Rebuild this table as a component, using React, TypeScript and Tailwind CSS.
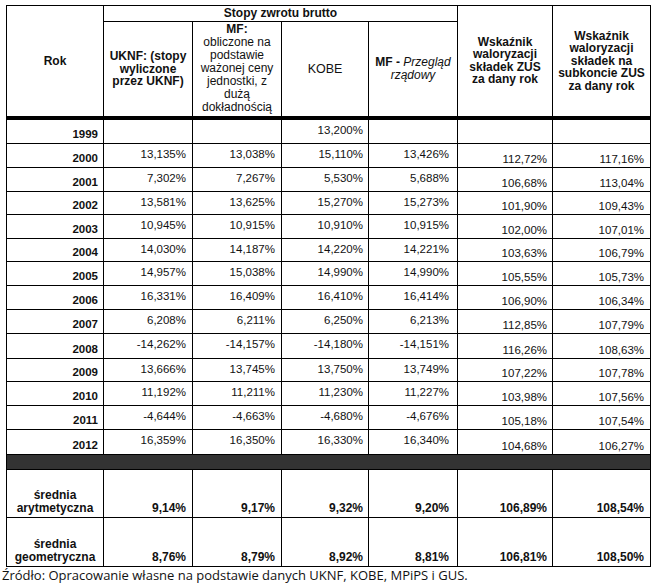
const rows: { year: string; h: number; v: string[] }[] = [
  { year: "1999", h: 26, v: ["", "", "13,200%", "", "", ""] },
  { year: "2000", h: 24, v: ["13,135%", "13,038%", "15,110%", "13,426%", "112,72%", "117,16%"] },
  { year: "2001", h: 24, v: ["7,302%", "7,267%", "5,530%", "5,688%", "106,68%", "113,04%"] },
  { year: "2002", h: 23, v: ["13,581%", "13,625%", "15,270%", "15,273%", "101,90%", "109,43%"] },
  { year: "2003", h: 24, v: ["10,945%", "10,915%", "10,910%", "10,915%", "102,00%", "107,01%"] },
  { year: "2004", h: 23, v: ["14,030%", "14,187%", "14,220%", "14,221%", "103,63%", "106,79%"] },
  { year: "2005", h: 24, v: ["14,957%", "15,038%", "14,990%", "14,990%", "105,55%", "105,73%"] },
  { year: "2006", h: 24, v: ["16,331%", "16,409%", "16,410%", "16,414%", "106,90%", "106,34%"] },
  { year: "2007", h: 24, v: ["6,208%", "6,211%", "6,250%", "6,213%", "112,85%", "107,79%"] },
  { year: "2008", h: 25, v: ["-14,262%", "-14,157%", "-14,180%", "-14,151%", "116,26%", "108,63%"] },
  { year: "2009", h: 23, v: ["13,666%", "13,745%", "13,750%", "13,749%", "107,22%", "107,78%"] },
  { year: "2010", h: 24, v: ["11,192%", "11,211%", "11,230%", "11,227%", "103,98%", "107,56%"] },
  { year: "2011", h: 24, v: ["-4,644%", "-4,663%", "-4,680%", "-4,676%", "105,18%", "107,54%"] },
  { year: "2012", h: 25, v: ["16,359%", "16,350%", "16,330%", "16,340%", "104,68%", "106,27%"] },
]

const averages = [
  { a: "średnia", b: "arytmetyczna", h: 48, v: ["9,14%", "9,17%", "9,32%", "9,20%", "106,89%", "108,54%"] },
  { a: "średnia", b: "geometryczna", h: 49, v: ["8,76%", "8,79%", "8,92%", "8,81%", "106,81%", "108,50%"] },
]

// right padding per value column
const pad = ["pr-[6px]", "pr-[6px]", "pr-[5px]", "pr-[8px]", "pr-[5px]", "pr-[6px]"]

const cell = "border border-black"

export default function App() {
  return (
    <div className="w-[653px] h-[588px] bg-white text-[#111] overflow-hidden" style={{ fontFamily: '"Liberation Sans", Arial, sans-serif' }}>
      <div className="pt-[5px] pl-[6px]">
        <table className="table-fixed border-collapse w-[645px]">
          <colgroup>
            <col className="w-[97px]" />
            <col className="w-[89px]" />
            <col className="w-[89px]" />
            <col className="w-[87px]" />
            <col className="w-[89px]" />
            <col className="w-[95px]" />
            <col className="w-[98px]" />
          </colgroup>
          <thead className="text-[12px] leading-[12.5px] text-center">
            <tr className="h-[16px]">
              <th rowSpan={2} className={`${cell} border-b-4 border-b-double font-bold`}>Rok</th>
              <th colSpan={4} className={`${cell} font-bold`}>Stopy zwrotu brutto</th>
              <th rowSpan={2} className={`${cell} border-b-4 border-b-double font-bold px-1`}>
                Wskaźnik waloryzacji składek ZUS za dany rok
              </th>
              <th rowSpan={2} className={`${cell} border-b-4 border-b-double font-bold px-1`}>
                Wskaźnik waloryzacji składek na subkoncie ZUS za dany rok
              </th>
            </tr>
            <tr className="h-[96px]">
              <th className={`${cell} border-b-4 border-b-double font-bold px-1`}>UKNF: (stopy wyliczone przez UKNF)</th>
              <th className={`${cell} border-b-4 border-b-double font-normal px-[3px] leading-[13px]`}>
                <span className="font-bold">MF:</span>
                <br />
                obliczone na podstawie ważonej ceny jednostki, z dużą dokładnością
              </th>
              <th className={`${cell} border-b-4 border-b-double font-normal text-[12.5px]`}>KOBE</th>
              <th className={`${cell} border-b-4 border-b-double font-normal px-0`}>
                <span className="font-bold">MF - </span>
                <span className="italic">Przegląd rządowy</span>
              </th>
            </tr>
          </thead>
          <tbody className="text-[11.5px] leading-[13px]">
            {rows.map((r) => (
              <tr key={r.year} style={{ height: r.h }}>
                <td className={`${cell} align-bottom text-right font-bold pr-[5px] pb-[2px]`}>{r.year}</td>
                {r.v.map((v, i) => (
                  <td
                    key={i}
                    className={`${cell} text-right ${pad[i]} ${i < 4 ? "align-top pt-[4px]" : "align-bottom pb-[1px]"}`}
                  >
                    {v}
                  </td>
                ))}
              </tr>
            ))}
            <tr className="h-[15px]">
              <td colSpan={7} className={`${cell} bg-[#333]`}></td>
            </tr>
            {averages.map((r) => (
              <tr key={r.b} style={{ height: r.h }}>
                <td className={`${cell} align-bottom text-center font-bold text-[12px] leading-[13px] pb-[2px]`}>
                  {r.a}
                  <br />
                  {r.b}
                </td>
                {r.v.map((v, i) => (
                  <td key={i} className={`${cell} align-bottom text-right font-bold text-[12px] pb-[2px] ${pad[i]}`}>
                    {v}
                  </td>
                ))}
              </tr>
            ))}
          </tbody>
        </table>
      </div>
      <p className="pl-[2px] text-[13px] leading-[17px] text-[#111]" style={{ fontFamily: '"Open Sans", sans-serif' }}>
        Źródło: Opracowanie własne na podstawie danych UKNF, KOBE, MPiPS i GUS.
      </p>
    </div>
  )
}
